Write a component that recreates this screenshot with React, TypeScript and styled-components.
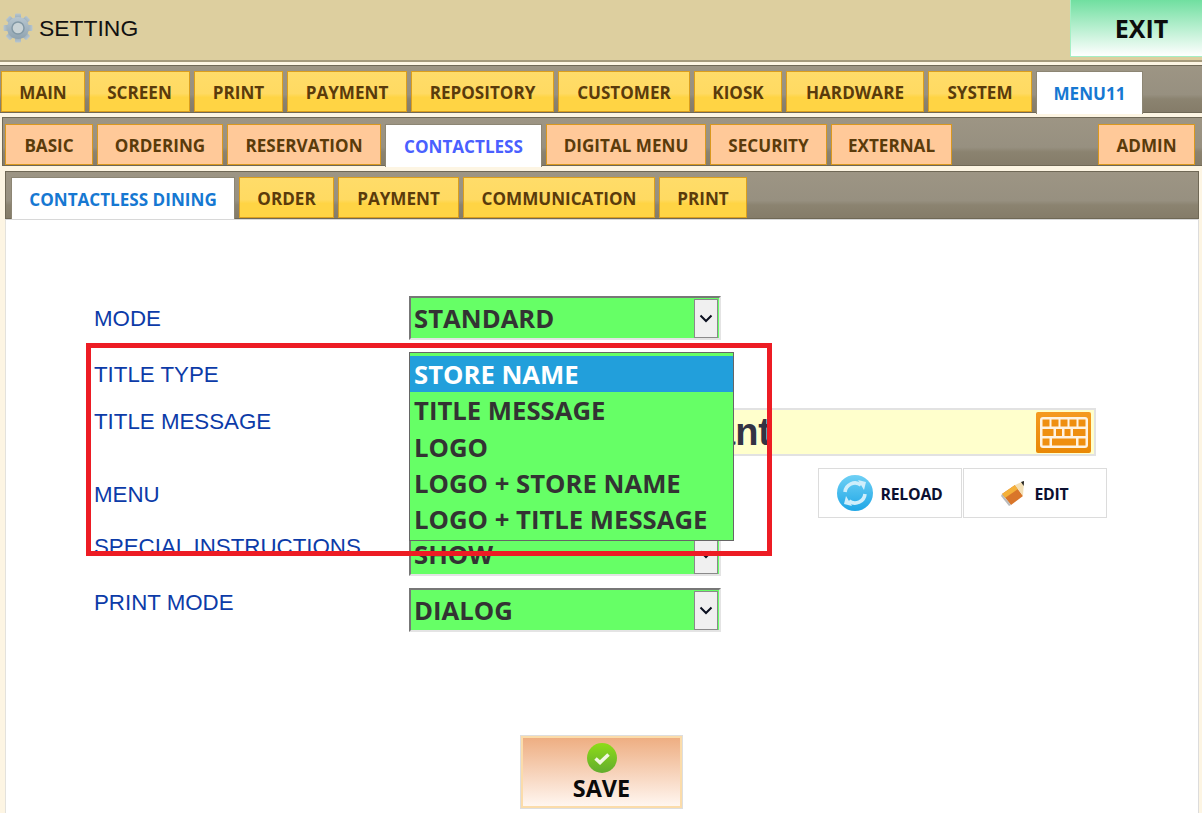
import React from "react";
import styled, { createGlobalStyle } from "styled-components";

const Global = createGlobalStyle`
  html, body { margin: 0; padding: 0; background: #fdf5e3; }
  #root { width: 1202px; height: 813px; overflow: hidden; }
`;

const UI = `"Open Sans", "Noto Sans", sans-serif`;
const ARIAL = `"Liberation Sans", Arial, sans-serif`;

const Page = styled.div`
  width: 1202px;
  height: 813px;
  display: flex;
  flex-direction: column;
  background: #fdf5e3;
  overflow: hidden;
`;

const Header = styled.header`
  height: 60px;
  flex: none;
  display: flex;
  justify-content: space-between;
  background: #ddcf9f;
  border-bottom: 2px solid #a59a7c;
`;

const Brand = styled.div`
  display: flex;
  align-items: center;
  gap: 6px;
  padding-left: 3px;
  height: 56px;
  font: 400 22.9px/1 ${ARIAL};
  color: #111;
`;

const Exit = styled.div`
  width: 132px;
  height: 57px;
  box-sizing: border-box;
  padding-left: 10px;
  display: flex;
  align-items: center;
  justify-content: center;
  background: linear-gradient(#70dfa0, #ffffff);
  border-left: 1px solid #a5efc5;
  border-bottom: 1px solid #a5efc5;
  font: 700 25px/1 ${UI};
  color: #0c0c0c;
`;

const Bar = styled.nav<{ $h: number; $mt: number; $ml: number; $mr: number; $pl: number; $pr?: number }>`
  height: ${(p) => p.$h}px;
  flex: none;
  box-sizing: border-box;
  margin: ${(p) => p.$mt}px ${(p) => p.$mr}px 0 ${(p) => p.$ml}px;
  padding: 0 ${(p) => p.$pr ?? 0}px 0 ${(p) => p.$pl}px;
  display: flex;
  gap: 4px;
  align-items: flex-end;
  background: linear-gradient(#9d9584 0%, #979080 62%, #8b8370 72%, #857c69 100%);
  border: 1px solid #6f6856;
`;

const palette = {
  yellow: {
    bg: "linear-gradient(#ffdc69 0%, #ffda62 55%, #ffd444 65%, #ffd444 100%)",
    bd: "#dc9f1c",
    fg: "#5a3b0b",
  },
  peach: { bg: "#ffc999", bd: "#d9981f", fg: "#5a3b0b" },
  white: { bg: "#fff", bd: "#8d8674", fg: "#1678d2" },
  indigo: { bg: "#fff", bd: "#8d8674", fg: "#4a60ff" },
};

const Tab = styled.div<{ $w: number; $kind: keyof typeof palette; $push?: boolean; $drop: number }>`
  width: ${(p) => p.$w}px;
  height: ${(p) => 41 + p.$drop}px;
  margin-bottom: ${(p) => -p.$drop}px;
  margin-left: ${(p) => (p.$push ? "auto" : "0")};
  flex: none;
  box-sizing: border-box;
  display: flex;
  align-items: center;
  justify-content: center;
  padding-top: 3px;
  padding-bottom: ${(p) => p.$drop}px;
  white-space: nowrap;
  background: ${(p) => palette[p.$kind].bg};
  border: 1px solid ${(p) => palette[p.$kind].bd};
  border-bottom-width: ${(p) => (p.$drop ? 0 : 1)}px;
  font: 700 17.1px/1 ${UI};
  color: ${(p) => palette[p.$kind].fg};
  position: relative;
`;

const Content = styled.main`
  flex: 1;
  margin: 0 3px 0 5px;
  background: #fff;
  border-top: 1px solid #d8d8d8;
  border-left: 1px solid #e4e2dc;
  border-right: 1px solid #dcdcdc;
  display: flex;
  flex-direction: column;
  position: relative;
`;

const Form = styled.div`
  margin-top: 76px;
  padding-left: 88px;
  display: flex;
  flex-direction: column;
  gap: 12px;
`;

const Row = styled.div<{ $h: number }>`
  height: ${(p) => p.$h}px;
  display: flex;
  align-items: flex-start;
`;

const Label = styled.label<{ $top: number }>`
  width: 315px;
  flex: none;
  padding-top: ${(p) => p.$top}px;
  font: 400 22.3px/26px ${ARIAL};
  color: #0c3ba8;
`;

const Select = styled.div`
  width: 312px;
  height: 44px;
  flex: none;
  box-sizing: border-box;
  display: flex;
  align-items: stretch;
  background: #66ff66;
  border-top: 2px solid #777;
  border-left: 2px solid #777;
  border-right: 2px solid #e4e4e4;
  border-bottom: 2px solid #e4e4e4;
  font: 700 25.7px/42px ${UI};
  color: #333;
`;

const SelectValue = styled.span`
  flex: 1;
  padding-left: 3px;
  overflow: hidden;
  white-space: nowrap;
`;

const Arrow = styled.span`
  width: 24px;
  flex: none;
  box-sizing: border-box;
  background: #f0f0f0;
  border: 1px solid #8a8a8a;
  display: flex;
  align-items: center;
  justify-content: center;
  margin: 1px 1px 0 0;
`;

const MessageInput = styled.div`
  width: 687px;
  height: 48px;
  flex: none;
  box-sizing: border-box;
  display: flex;
  align-items: center;
  justify-content: flex-end;
  padding: 0 3px 0 0;
  background: #ffffcc;
  border: 2px solid #e2e2e2;
  position: relative;
`;

const MessageText = styled.span`
  position: absolute;
  left: 0;
  top: 0;
  width: 360px;
  text-align: right;
  font: 700 38px/44px ${ARIAL};
  color: #333344;
`;

const KeyButton = styled.div`
  width: 55px;
  height: 41px;
  border-radius: 2px;
  background: linear-gradient(#f59a20, #e98806);
  display: flex;
  align-items: center;
  justify-content: center;
  position: relative;
`;

const Actions = styled.div`
  display: flex;
  gap: 1px;
  margin-left: 97px;
`;

const ActionButton = styled.div`
  width: 144px;
  height: 50px;
  box-sizing: border-box;
  display: flex;
  align-items: center;
  justify-content: center;
  gap: 7px;
  background: #fff;
  border: 1px solid #dcdcdc;
`;

const ActionText = styled.span`
  padding-top: 3px;
  font: 700 15.8px/1 ${UI};
  letter-spacing: -0.2px;
  color: #0c1030;
`;

const Save = styled.div`
  width: 161px;
  height: 72px;
  flex: none;
  box-sizing: border-box;
  align-self: center;
  margin: 104px 0 0 -1px;
  display: flex;
  flex-direction: column;
  align-items: center;
  padding-top: 5px;
  background: linear-gradient(#eeae82, #fff6f0);
  border: 2px solid #fbdcaa;
  outline: 1px solid #dedede;
  font: 700 23.4px/30px ${UI};
  color: #0a0a0a;
`;

const Dropdown = styled.ul`
  position: absolute;
  left: 403px;
  top: 132px;
  width: 325px;
  height: 189px;
  box-sizing: border-box;
  margin: 0;
  padding: 3px 0 0;
  list-style: none;
  background: #66ff66;
  border: 1px solid #666;
`;

const Option = styled.li<{ $selected?: boolean }>`
  height: 36.3px;
  padding-left: 4px;
  background: ${(p) => (p.$selected ? "#229fdb" : "transparent")};
  color: ${(p) => (p.$selected ? "#fff" : "#333")};
  font: 700 25.7px/38px ${UI};
  white-space: nowrap;
`;

const Highlight = styled.div`
  position: absolute;
  left: 80px;
  top: 123px;
  width: 686px;
  height: 213px;
  box-sizing: border-box;
  border: 5px solid #ed1c24;
  pointer-events: none;
`;

const Chevron = () => (
  <svg width="14" height="9" viewBox="0 0 14 9" fill="none">
    <path d="M1.5 1.5 7 7l5.5-5.5" stroke="#0b1020" strokeWidth="2" />
  </svg>
);

const GearIcon = () => (
  <svg width="30" height="30" viewBox="0 0 30 30">
    <defs>
      <linearGradient id="gear" x1="0" y1="0" x2="0" y2="1">
        <stop offset="0" stopColor="#b7c6d0" />
        <stop offset="1" stopColor="#8fa3b0" />
      </linearGradient>
    </defs>
    <g fill="url(#gear)">
      {[0, 45, 90, 135, 180, 225, 270, 315].map((a) => (
        <rect key={a} x="12" y="0.5" width="6" height="7" rx="1" transform={`rotate(${a} 15 15)`} />
      ))}
      <circle cx="15" cy="15" r="11" />
    </g>
    <circle cx="15" cy="15" r="6" fill="#c9d3d6" stroke="#8399a6" strokeWidth="1.5" />
  </svg>
);

const KeyboardIcon = () => (
  <svg width="48" height="31" viewBox="0 0 48 31">
    <rect x="0" y="0" width="48" height="31" rx="3" fill="#fff3e2" />
    <g fill="#ef8f10">
      {[2.5, 11.5, 20.5, 29.5, 38.5].map((x) => (
        <rect key={x} x={x} y="2.5" width="7" height="7" />
      ))}
      <rect x="2.5" y="12" width="11" height="7" />
      <rect x="16" y="12" width="6" height="7" />
      <rect x="24.5" y="12" width="6" height="7" />
      <rect x="33" y="12" width="12.5" height="7" />
      <rect x="2.5" y="21.5" width="7" height="7" />
      <rect x="12" y="21.5" width="24" height="7" />
      <rect x="38.5" y="21.5" width="7" height="7" />
    </g>
  </svg>
);

const ReloadIcon = () => (
  <svg width="36" height="36" viewBox="0 0 36 36">
    <defs>
      <linearGradient id="rl" x1="0" y1="0" x2="0" y2="1">
        <stop offset="0" stopColor="#6fd0f5" />
        <stop offset="1" stopColor="#1ea6e6" />
      </linearGradient>
    </defs>
    <circle cx="18" cy="18" r="18" fill="url(#rl)" />
    <g fill="none" stroke="#cfeefb" strokeWidth="3.6">
      <path d="M8 17a10 10 0 0 1 16-7" />
      <path d="M28 19a10 10 0 0 1-16 7" />
    </g>
    <path d="M21 5l8 2-2 8z" fill="#cfeefb" />
    <path d="M15 31l-8-2 2-8z" fill="#cfeefb" />
  </svg>
);

const PencilIcon = () => (
  <svg width="26" height="26" viewBox="0 0 26 26">
    <path d="M1 14 14 5l8 11-12 9z" fill="#d9762a" />
    <path d="M1 14 14 5l3 4L4 18z" fill="#f4b13a" />
    <path d="M14 5l9-4-1 15z" fill="#f3dfb5" />
    <path d="M20 2l3-1-.3 5z" fill="#222" />
    <path d="M1 14l9 11-2 1-8-10z" fill="#bbb" />
  </svg>
);

const CheckIcon = () => (
  <svg width="30" height="30" viewBox="0 0 30 30">
    <defs>
      <linearGradient id="ck" x1="0" y1="0" x2="0" y2="1">
        <stop offset="0" stopColor="#8edc18" />
        <stop offset="1" stopColor="#62ac2e" />
      </linearGradient>
    </defs>
    <circle cx="15" cy="15" r="15" fill="url(#ck)" />
    <path d="M8.5 15.5l4.5 4 8.5-8" fill="none" stroke="#f2f7e2" strokeWidth="3.6" />
  </svg>
);

type T = [string, number, keyof typeof palette, boolean?];

const main: T[] = [
  ["MAIN", 84, "yellow"], ["SCREEN", 101, "yellow"], ["PRINT", 89, "yellow"], ["PAYMENT", 120, "yellow"],
  ["REPOSITORY", 143, "yellow"], ["CUSTOMER", 132, "yellow"], ["KIOSK", 88, "yellow"], ["HARDWARE", 138, "yellow"],
  ["SYSTEM", 104, "yellow"], ["MENU11", 107, "white"],
];
const sub: T[] = [
  ["BASIC", 88, "peach"], ["ORDERING", 126, "peach"], ["RESERVATION", 154, "peach"], ["CONTACTLESS", 157, "indigo"],
  ["DIGITAL MENU", 160, "peach"], ["SECURITY", 117, "peach"], ["EXTERNAL", 121, "peach"], ["ADMIN", 97, "peach", true],
];
const third: T[] = [
  ["CONTACTLESS DINING", 224, "white"], ["ORDER", 95, "yellow"], ["PAYMENT", 121, "yellow"],
  ["COMMUNICATION", 192, "yellow"], ["PRINT", 88, "yellow"],
];

const renderTabs = (list: T[], drop: number) =>
  list.map(([label, w, kind, push]) => (
    <Tab key={label} $w={w} $kind={kind} $push={push} $drop={kind === "white" || kind === "indigo" ? drop : 0}>
      {label}
    </Tab>
  ));

const options = ["STORE NAME", "TITLE MESSAGE", "LOGO", "LOGO + STORE NAME", "LOGO + TITLE MESSAGE"];

const Field = ({ value }: { value?: string }) => (
  <Select>
    <SelectValue>{value}</SelectValue>
    <Arrow>
      <Chevron />
    </Arrow>
  </Select>
);

export default function App() {
  return (
    <Page>
      <Global />
      <Header>
        <Brand>
          <GearIcon />
          SETTING
        </Brand>
        <Exit>EXIT</Exit>
      </Header>
      <Bar $h={48} $mt={3} $ml={-1} $mr={-1} $pl={1}>{renderTabs(main, 2)}</Bar>
      <Bar $h={49} $mt={4} $ml={2} $mr={-1} $pl={2} $pr={7}>{renderTabs(sub, 2)}</Bar>
      <Bar $h={48} $mt={5} $ml={5} $mr={3} $pl={5}>{renderTabs(third, 1)}</Bar>
      <Content>
        <Form>
          <Row $h={44}>
            <Label $top={10}>MODE</Label>
            <Field value="STANDARD" />
          </Row>
          <Row $h={44}>
            <Label $top={10}>TITLE TYPE</Label>
            <Field />
          </Row>
          <Row $h={48}>
            <Label $top={1}>TITLE MESSAGE</Label>
            <MessageInput>
              <MessageText>Restaurant</MessageText>
              <KeyButton>
                <KeyboardIcon />
              </KeyButton>
            </MessageInput>
          </Row>
          <Row $h={52}>
            <Label $top={14}>MENU</Label>
            <Field />
            <Actions>
              <ActionButton>
                <ReloadIcon />
                <ActionText>RELOAD</ActionText>
              </ActionButton>
              <ActionButton>
                <PencilIcon />
                <ActionText>EDIT</ActionText>
              </ActionButton>
            </Actions>
          </Row>
          <Row $h={44}>
            <Label $top={2}>SPECIAL INSTRUCTIONS</Label>
            <Field value="SHOW" />
          </Row>
          <Row $h={44}>
            <Label $top={2}>PRINT MODE</Label>
            <Field value="DIALOG" />
          </Row>
        </Form>
        <Save>
          <CheckIcon />
          SAVE
        </Save>
        <Dropdown>
          {options.map((o, i) => (
            <Option key={o} $selected={i === 0}>{o}</Option>
          ))}
        </Dropdown>
        <Highlight />
      </Content>
    </Page>
  );
}
